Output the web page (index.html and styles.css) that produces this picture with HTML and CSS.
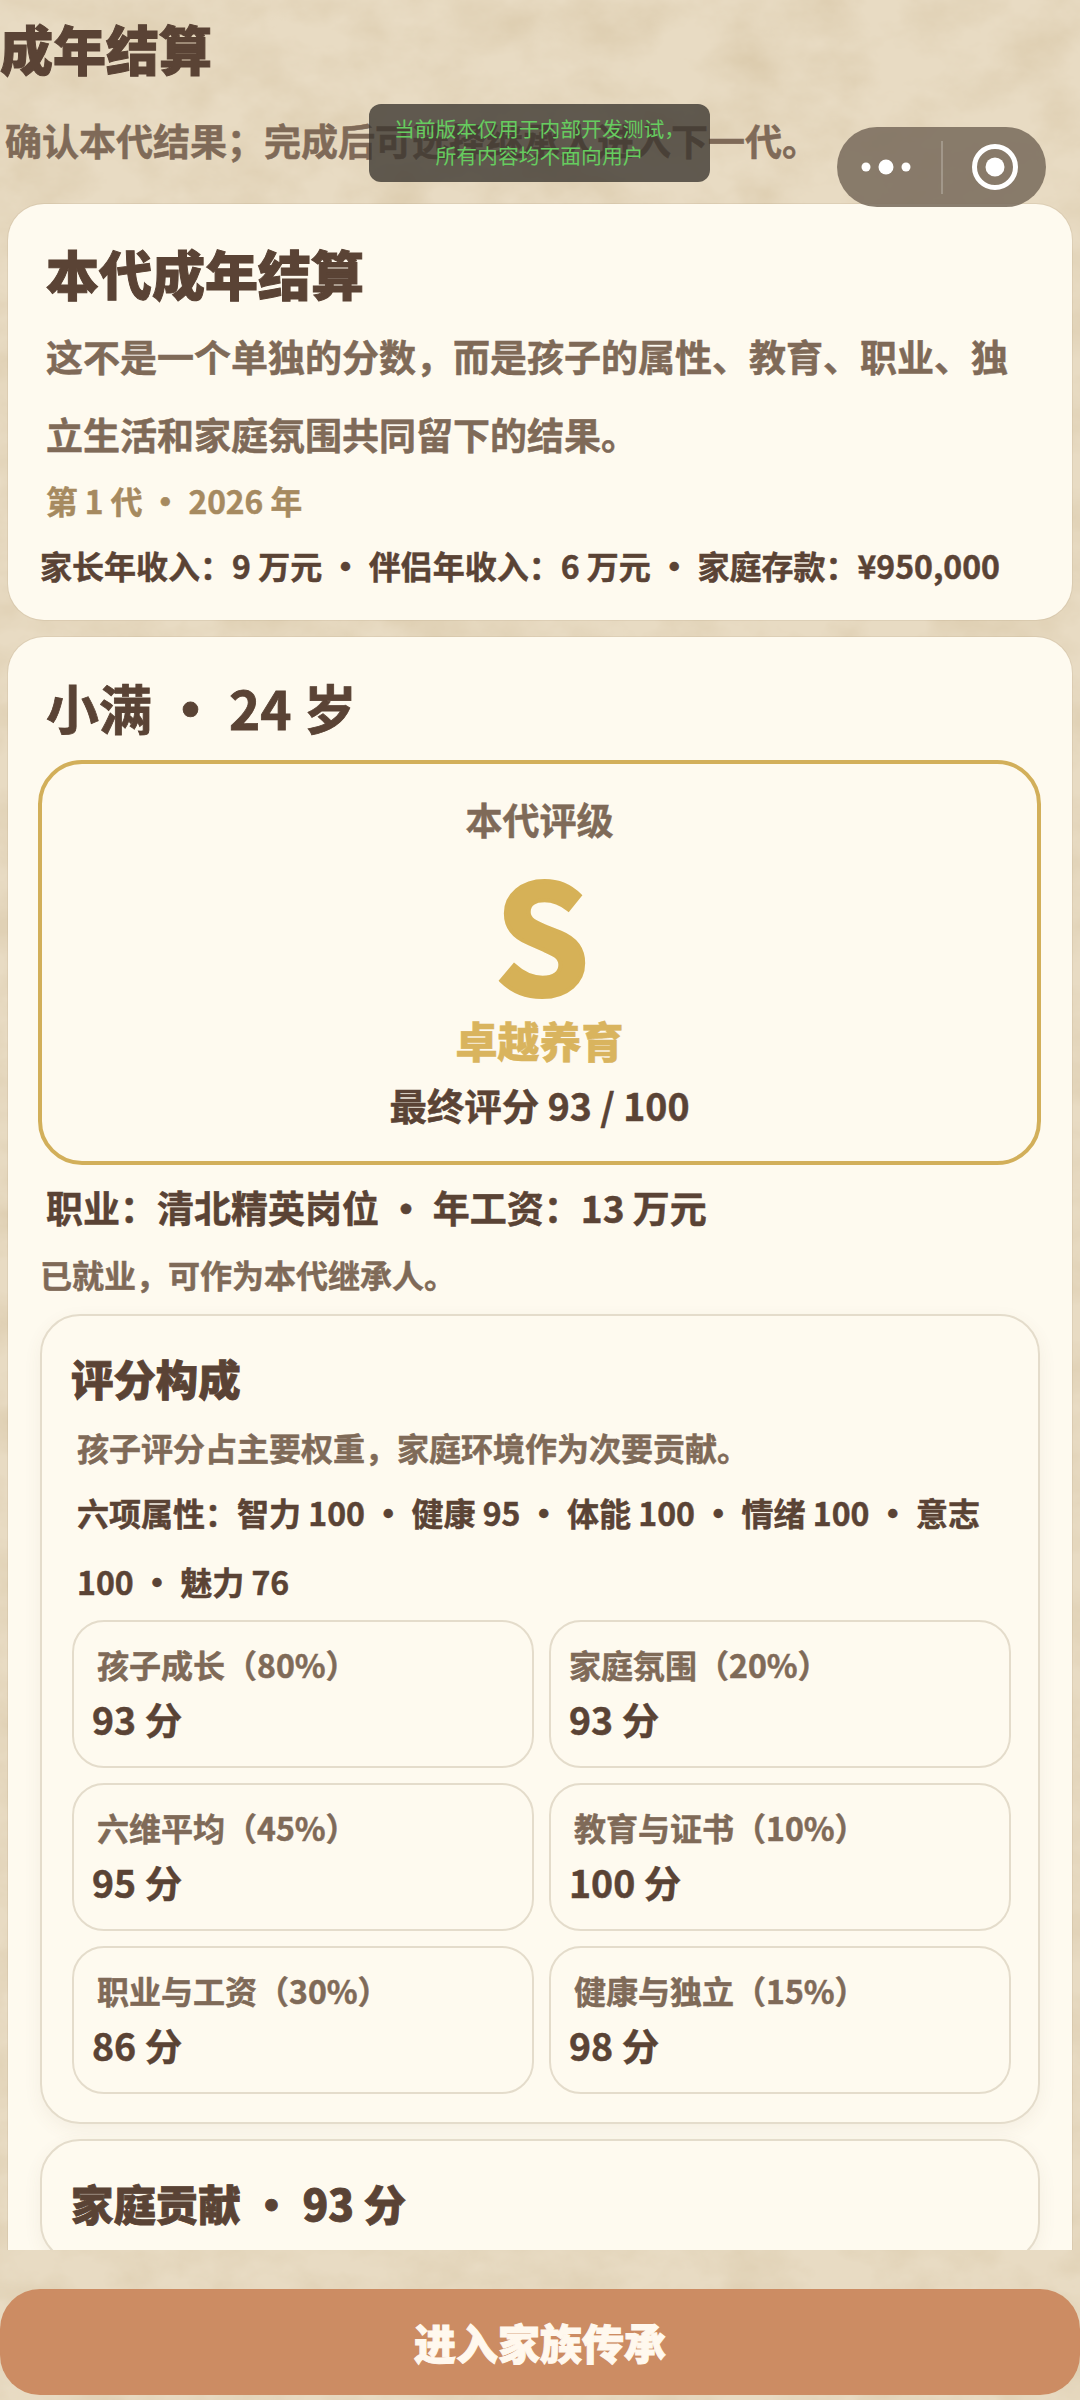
FILE: index.html
```html
<!DOCTYPE html>
<html lang="zh-CN">
<head>
<meta charset="utf-8">
<title>成年结算</title>
<link rel="stylesheet" href="styles.css">
</head>
<body>
<div class="page">
  <svg class="paper" width="1080" height="2400" aria-hidden="true">
    <filter id="grain" x="0" y="0" width="100%" height="100%">
      <feTurbulence type="fractalNoise" baseFrequency="0.014 0.02" numOctaves="5" seed="7"/>
      <feColorMatrix type="matrix" values="0 0 0 0 0.60  0 0 0 0 0.47  0 0 0 0 0.28  0.5 0.4 0 0 -0.36"/>
    </filter>
    <rect width="1080" height="2400" filter="url(#grain)"/>
  </svg>

  <main class="scroll">
    <h1 class="page-title">成年结算</h1>
    <p class="page-sub">确认本代结果；完成后可选择继承人进入下一代。</p>

    <section class="card card-intro">
      <h2 class="card-title">本代成年结算</h2>
      <p class="intro-desc">这不是一个单独的分数，而是孩子的属性、教育、职业、独立生活和家庭氛围共同留下的结果。</p>
      <p class="intro-meta">第 1 代 <span class="dot">·</span> 2026 年</p>
      <p class="intro-money">家长年收入：9 万元 <span class="dot">·</span> 伴侣年收入：6 万元 <span class="dot">·</span> 家庭存款：¥950,000</p>
    </section>

    <section class="card card-child">
      <h2 class="child-name">小满 <span class="dot">·</span> 24 岁</h2>
      <div class="rating">
        <div class="rating-label">本代评级</div>
        <div class="rating-grade">S</div>
        <div class="rating-name">卓越养育</div>
        <div class="rating-score">最终评分 93 / 100</div>
      </div>
      <p class="job">职业：清北精英岗位 <span class="dot">·</span> 年工资：13 万元</p>
      <p class="job-note">已就业，可作为本代继承人。</p>

      <div class="panel">
        <h3 class="panel-title">评分构成</h3>
        <p class="panel-desc">孩子评分占主要权重，家庭环境作为次要贡献。</p>
        <p class="panel-attrs">六项属性：智力 100 <span class="dot">·</span> 健康 95 <span class="dot">·</span> 体能 100 <span class="dot">·</span> 情绪 100 <span class="dot">·</span> 意志 100 <span class="dot">·</span> 魅力 76</p>
        <div class="score-grid">
          <div class="score"><div class="score-label">孩子成长（80%）</div><div class="score-value">93 分</div></div>
          <div class="score"><div class="score-label flush">家庭氛围（20%）</div><div class="score-value">93 分</div></div>
          <div class="score"><div class="score-label">六维平均（45%）</div><div class="score-value">95 分</div></div>
          <div class="score"><div class="score-label">教育与证书（10%）</div><div class="score-value">100 分</div></div>
          <div class="score"><div class="score-label">职业与工资（30%）</div><div class="score-value">86 分</div></div>
          <div class="score"><div class="score-label">健康与独立（15%）</div><div class="score-value">98 分</div></div>
        </div>
      </div>

      <div class="panel panel-next">
        <h3 class="panel-title">家庭贡献 <span class="dot">·</span> 93 分</h3>
      </div>
    </section>
  </main>

  <footer class="footer">
    <button class="cta" type="button">进入家族传承</button>
  </footer>

  <div class="toast">当前版本仅用于内部开发测试，<br>所有内容均不面向用户</div>

  <div class="capsule">
    <svg class="capsule-more" width="60" height="20" viewBox="0 0 60 20" aria-hidden="true">
      <circle cx="9" cy="10" r="4.5"/><circle cx="29" cy="10" r="7.5"/><circle cx="49" cy="10" r="4.5"/>
    </svg>
    <span class="capsule-line"></span>
    <svg class="capsule-close" width="46" height="46" viewBox="0 0 46 46" aria-hidden="true">
      <circle class="ring" cx="23" cy="23" r="20.5"/><circle cx="23" cy="23" r="9.5"/>
    </svg>
  </div>
</div>
</body>
</html>
```

FILE: styles.css
```css
* { box-sizing: border-box; }
html, body { margin: 0; padding: 0; }
body {
  font-family: "Noto Sans CJK SC", "Noto Sans", sans-serif;
  font-weight: 700;
  color: #5a4335;
  background: #e6d8bf;
  -webkit-text-stroke: 0.5px currentColor;
}
h1, h2, h3, p { margin: 0; font-weight: inherit; }

.page { position: relative; width: 1080px; height: 2400px; overflow: hidden; background: #e8dbc3; }
.paper { position: absolute; left: 0; top: 0; }
.scroll { position: relative; height: 2250px; overflow: hidden; padding-top: 8px; }

.page-title { font-size: 53px; line-height: 80px; font-weight: 900; -webkit-text-stroke-width: 1px; }
.page-sub { margin-top: 22px; padding-left: 5px; font-size: 37px; line-height: 60px; color: #7f6a58; white-space: nowrap; }

.card { margin: 0 8px; background: #fefaef; border-radius: 36px; box-shadow: 0 0 0 1px rgba(150,125,90,.12); }
.dot { font-weight: 900; }

.card-intro { margin-top: 34px; height: 416px; padding: 33px 38px 0; }
.card-title { font-size: 53px; line-height: 73px; font-weight: 900; -webkit-text-stroke-width: 1px; }
.intro-desc { font-size: 37px; line-height: 78px; color: #7f6a58; margin-top: 7px; }
.intro-meta { font-size: 31.68px; line-height: 50px; color: #a68a60; margin-top: 2px; }
.intro-money { font-size: 32px; line-height: 50px; margin: 15px 0 0 -6px; white-space: nowrap; }

.card-child { margin-top: 17px; padding: 40px 31px 0 30px; height: 1700px; }
.child-name { font-size: 53px; line-height: 60px; padding-left: 8px; -webkit-text-stroke-width: 0.8px; }

.rating {
  margin-top: 23px; height: 405px; padding-top: 30px;
  border: 4px solid #d2af5a; border-radius: 44px; text-align: center;
}
.rating-label { font-size: 37px; line-height: 50px; color: #7f6a58; }
.rating-grade { font-size: 151px; line-height: 160px; margin-top: 5px; padding-left: 5px; font-weight: 700; color: #d6b157; -webkit-text-stroke-width: 4px; }
.rating-name { font-size: 42px; line-height: 60px; margin-top: 1px; color: #d9b45e; font-weight: 900; }
.rating-score { font-size: 37.44px; line-height: 50px; margin-top: 10px; }

.job { font-size: 37px; line-height: 50px; margin-top: 17px; padding-left: 8px; }
.job-note { font-size: 32px; line-height: 44px; margin-top: 20px; padding-left: 2px; color: #7f6a58; }

.panel {
  margin: 18px 1px 0 2px; padding: 32px 27px 28px 30px;
  border: 2px solid #e4dccb; border-radius: 40px; background: #fefaef;
  box-shadow: 0 6px 18px rgba(120,90,50,.07);
}
.panel-title { font-size: 42.4px; line-height: 60px; margin-left: -1px; font-weight: 900; -webkit-text-stroke-width: 0.8px; }
.panel-desc { font-size: 32px; line-height: 44px; margin-top: 17px; padding-left: 5px; color: #7f6a58; }
.panel-attrs { font-size: 32px; line-height: 69px; margin-top: 9px; padding-left: 5px; }
.panel-next { margin-top: 15px; }

.score-grid { display: grid; grid-template-columns: 462px 462px; gap: 15px; margin-top: 4px; }
.score { height: 148px; padding: 20px 18px 0; border: 2px solid #e4dccb; border-radius: 32px; }
.score-label { font-size: 32px; line-height: 44px; padding-left: 5px; color: #7f6a58; white-space: nowrap; }
.score-label.flush { padding-left: 0; }
.score-value { font-size: 37.44px; line-height: 50px; margin-top: 8px; }

.footer { position: relative; margin-top: 39px; }
.cta {
  display: block; width: 1080px; height: 106px; padding: 0; border: 0; border-radius: 40px;
  background: #cc8c63; color: #fff8ee; font: 900 42px/106px "Noto Sans CJK SC", sans-serif;
  -webkit-text-stroke: 1px currentColor;
}

.toast {
  position: absolute; left: 369px; top: 104px; width: 341px; height: 78px; padding-top: 11px;
  border-radius: 12px; background: rgba(58,52,46,.78); color: #66cc5f;
  font-size: 20.8px; font-weight: 400; line-height: 27px; text-align: center;
  -webkit-text-stroke-width: 0;
}

.capsule {
  position: absolute; left: 837px; top: 127px; width: 209px; height: 80px; padding-left: 20px;
  display: flex; align-items: center;
  border-radius: 40px; background: rgba(125,112,96,.9);
}
.capsule svg circle { fill: #fff; }
.capsule-line { width: 2px; height: 53px; margin: 0 29px 0 24px; background: rgba(255,255,255,.22); }
.capsule .ring { fill: none; stroke: #fff; stroke-width: 5; }
```
